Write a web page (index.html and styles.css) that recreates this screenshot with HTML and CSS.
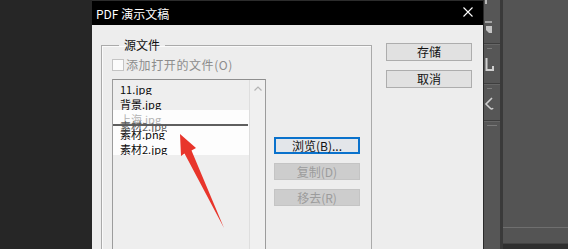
FILE: index.html
```html
<!DOCTYPE html>
<html>
	<head>
		<meta charset="utf-8">
		<link rel="stylesheet" href="styles.css">
	</head>
	<body>
		<div class="screen">
			<div class="dialog">
				<div class="titlebar">
					<span class="title">PDF 演示文稿</span>
					<svg class="close" width="10" height="10" viewBox="0 0 10 10">
						<path d="M0.5 0.5 L9.5 9.5 M9.5 0.5 L0.5 9.5" stroke="#fff" stroke-width="1.1" fill="none"/>
					</svg>
				</div>
				<div class="dialog-body">
					<fieldset class="group">
						<legend>源文件</legend>
						<label class="check-row">
							<input class="check" type="checkbox" disabled>
							<span>添加打开的文件(O)</span>
						</label>
						<div class="files">
							<div class="listbox">
								<div class="items">
									<div class="item">11.jpg</div>
									<div class="item">背景.jpg</div>
									<div class="item sel faded">上海.jpg</div>
									<div class="item sel">素材.png</div>
									<div class="item sel">素材2.jpg</div>
									<div class="drop-line"></div>
									<div class="item drag-ghost">素材2.jpg</div>
								</div>
								<div class="vscroll">
									<svg width="8" height="5" viewBox="0 0 8 5">
										<path d="M0.5 4.5 L4 1 L7.5 4.5" stroke="#b4b4b4" stroke-width="1.2" fill="none"/>
									</svg>
								</div>
							</div>
							<div class="side-btns">
								<button class="btn focus">浏览(B)...</button>
								<button class="btn" disabled>复制(D)</button>
								<button class="btn" disabled>移去(R)</button>
							</div>
						</div>
					</fieldset>
					<div class="main-btns">
						<button class="btn">存储</button>
						<button class="btn">取消</button>
					</div>
				</div>
			</div>
			<div class="dock">
				<div class="strip">
					<svg width="16" height="249" viewBox="0 0 16 249">
						<rect x="1" y="0" width="2" height="4" fill="#b8b8b8"/>
						<path d="M1 22 H8" stroke="#bdbdbd" stroke-width="1.5"/>
						<path d="M2 26 H8 V33 H5 L2 30 Z" fill="#c4c4c4"/>
						<path d="M0 43.5 H16" stroke="#3e3e3e"/>
						<path d="M0 44.5 H16" stroke="#666"/>
						<path d="M3 48.5 H8" stroke="#7a7a7a"/>
						<path d="M2.5 58 V70 H9 V66" stroke="#cfcfcf" stroke-width="2" fill="none"/>
						<path d="M0 83.5 H16" stroke="#3e3e3e"/>
						<path d="M0 84.5 H16" stroke="#666"/>
						<path d="M3 88.5 H8" stroke="#7a7a7a"/>
						<path d="M8 98 L2 104 L6 108 Q8 110 9 108" stroke="#cfcfcf" stroke-width="1.6" fill="none"/>
						<path d="M0 120.5 H16" stroke="#3e3e3e"/>
						<path d="M0 121.5 H16" stroke="#666"/>
						<path d="M3 125.5 H13" stroke="#7a7a7a"/>
					</svg>
				</div>
				<div class="panel">
					<div class="shelf-line"></div>
					<div class="shelf-gap"></div>
					<div class="shelf-bar"></div>
				</div>
			</div>
		</div>
		<svg class="pointer" width="568" height="249" viewBox="0 0 568 249">
			<polygon points="180,134 196,148 191.5,150.5 224,228 184.5,153.5 181,156" fill="#e8352b"/>
		</svg>
	</body>
</html>
```

FILE: styles.css
```css
body{
	margin: 0;
	width: 568px;
	height: 249px;
	overflow: hidden;
	background-color: #262626;
	font-family: "Noto Sans CJK SC", "Noto Sans", sans-serif;
	position: relative;
}
.screen{
	display: flex;
	height: 249px;
	padding-left: 92px;
}
.dialog{
	width: 391px;
	display: flex;
	flex-direction: column;
	background-color: #ededed;
	overflow: hidden;
}
.titlebar{
	flex-shrink: 0;
	height: 24px;
	border-top: 1px solid #2c2c2c;
	background-color: #000;
	color: #fff;
	display: flex;
	align-items: center;
	justify-content: space-between;
	padding: 0 10px 0 4px;
	font-size: 12px;
}
.close{
	display: block;
	margin-top: -2px;
}
.dialog-body{
	flex: 1;
	display: flex;
	align-items: flex-start;
	padding: 12px 0 0 9px;
}
.group{
	flex-shrink: 0;
	width: 271px;
	height: 240px;
	box-sizing: border-box;
	margin: 0;
	padding: 0 9px 0 10px;
	border: 1px solid #aaaaaa;
	box-shadow: inset 1px 1px 0 #fafafa;
}
.group legend{
	margin-left: 7px;
	padding: 0 5px;
	font-size: 12px;
	line-height: 16px;
	color: #111;
}
.check-row{
	display: flex;
	align-items: center;
	height: 13px;
	margin-top: 5px;
	font-size: 12px;
	color: #8c8c8c;
	letter-spacing: 0.6px;
}
.check{
	appearance: none;
	width: 12px;
	height: 12px;
	margin: 0 2px 0 0;
	border: 1px solid #c4c4c4;
	background-color: #fbfbfb;
}
.files{
	display: flex;
	gap: 8px;
	margin-top: 8px;
}
.listbox{
	width: 154px;
	height: 200px;
	box-sizing: border-box;
	border: 1px solid #9c9c9c;
	border-top-color: #8e8e8e;
	display: flex;
	background-color: #eeeeee;
}
.items{
	flex: 1;
	position: relative;
}
.item{
	height: 15px;
	box-sizing: border-box;
	overflow: hidden;
	padding: 4px 0 0 7px;
	font-size: 11px;
	line-height: 1;
	color: #0a0a0a;
	white-space: nowrap;
}
.sel{
	background-color: #fdfdfd;
}
.faded{
	color: #b2b2b2;
}
.drop-line{
	position: absolute;
	left: 0;
	top: 44px;
	width: 135px;
	height: 2px;
	background-color: #5f5f5f;
}
.drag-ghost{
	position: absolute;
	left: 0;
	top: 37px;
	color: #5a5a5a;
	background: none;
}
.vscroll{
	width: 15px;
	border-left: 1px solid #dedede;
	background-color: #f0f0f0;
	display: flex;
	justify-content: center;
	padding-top: 6px;
	align-items: flex-start;
}
.vscroll svg{
	display: block;
}
.side-btns{
	width: 86px;
	display: flex;
	flex-direction: column;
	gap: 9px;
	margin-top: 58px;
}
.btn{
	height: 17px;
	box-sizing: border-box;
	padding: 0;
	border: 1px solid #adadad;
	background-color: #e1e1e1;
	font-family: "Noto Sans CJK SC", "Noto Sans", sans-serif;
	font-size: 12px;
	line-height: 14px;
	color: #111;
}
.btn.focus{
	border: 2px solid #0a72cc;
	background-color: #e3e6ea;
	line-height: 12px;
}
.btn:disabled{
	background-color: #cdcdcd;
	border-color: #c4c4c4;
	color: #9c9c9c;
}
.main-btns{
	flex-shrink: 0;
	width: 86px;
	margin: 6px 0 0 14px;
	display: flex;
	flex-direction: column;
	gap: 9px;
}
.main-btns .btn{
	height: 18px;
}
.dock{
	flex: 1;
	display: flex;
}
.strip{
	width: 16px;
	border-left: 1px solid #2a2a2a;
	border-right: 3px solid #3a3a3a;
	background-color: #565656;
}
.strip svg{
	display: block;
}
.panel{
	flex: 1;
	display: flex;
	flex-direction: column;
	justify-content: flex-end;
	background-color: #545454;
}
.shelf-line{
	height: 1px;
	background-color: #6f6f6f;
}
.shelf-gap{
	height: 15px;
}
.shelf-bar{
	height: 5px;
	background-color: #2f2f2f;
	border-top: 1px solid #444;
}
.pointer{
	position: absolute;
	left: 0;
	top: 0;
	pointer-events: none;
}
```
